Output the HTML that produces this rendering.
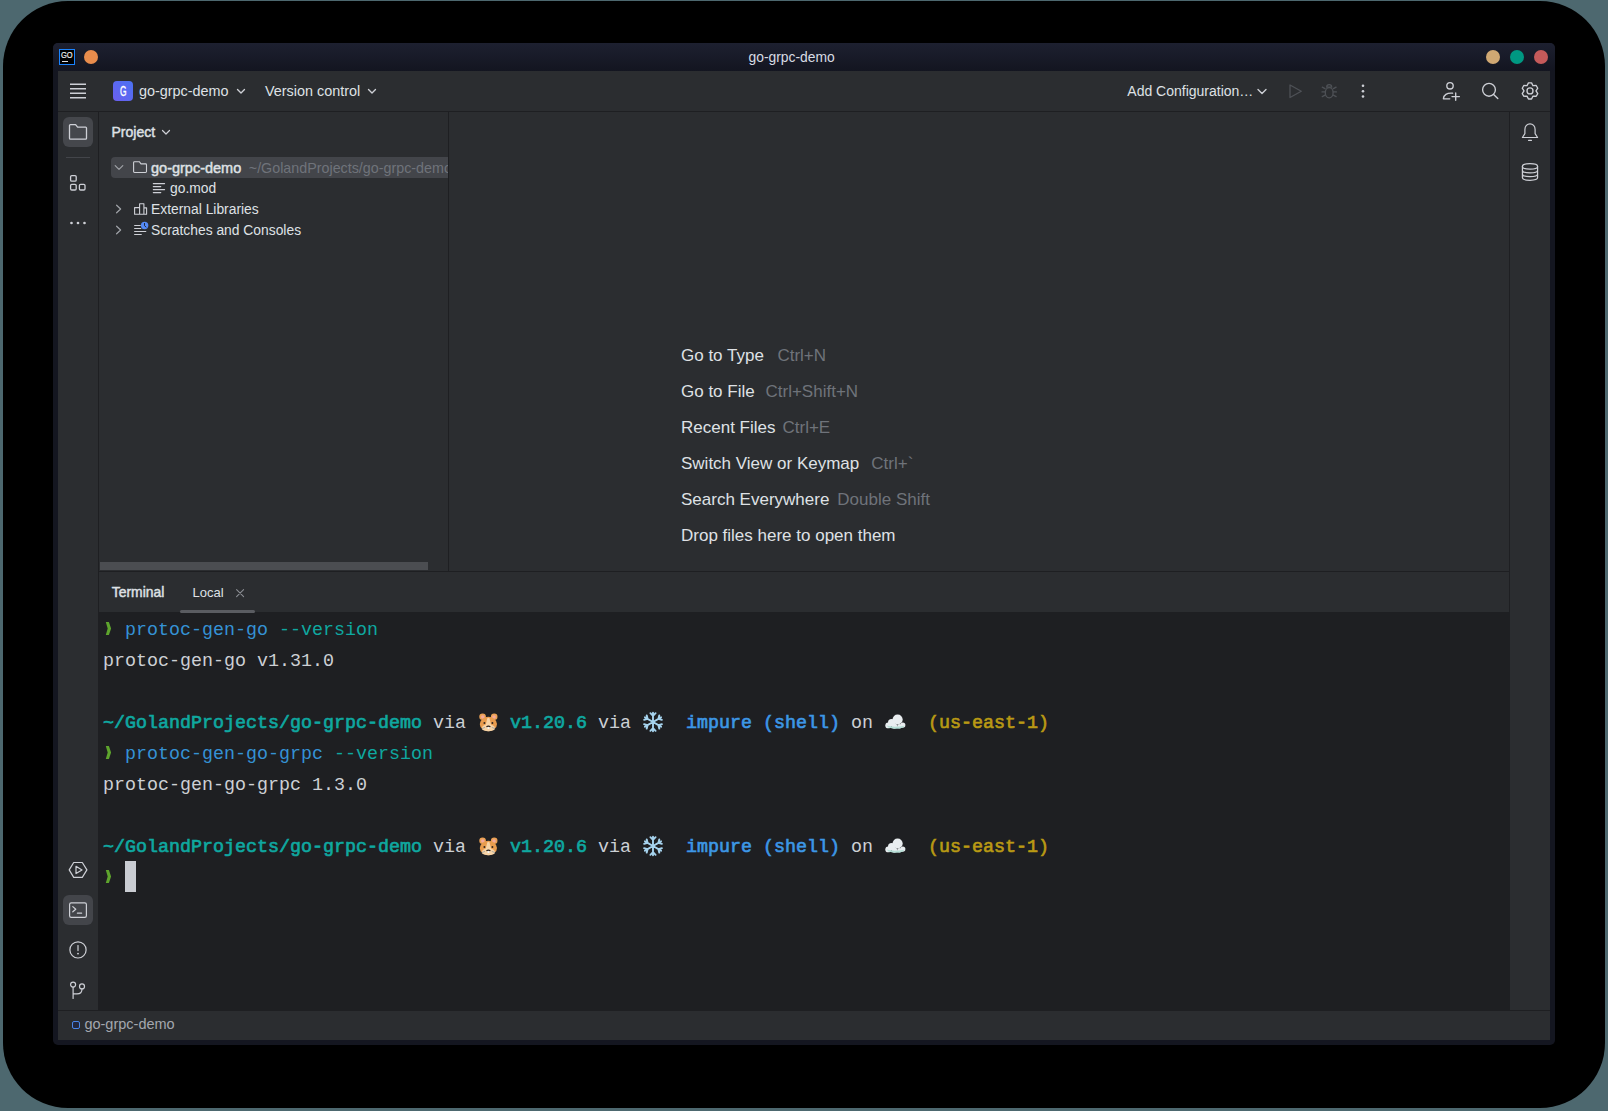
<!DOCTYPE html>
<html><head><meta charset="utf-8"><style>
*{margin:0;padding:0;box-sizing:border-box}
html,body{width:1608px;height:1111px;overflow:hidden;background:#4d686f;font-family:"Liberation Sans",sans-serif}
.a{position:absolute}
.t{position:absolute;white-space:pre;line-height:1}
.sep{position:absolute;background:#1e1f22}
svg{position:absolute;overflow:visible}
#frame{left:3px;top:1px;width:1602px;height:1107px;background:#000;border-radius:65px}
#win{left:53px;top:43px;width:1502px;height:1002px;background:#141620;border-radius:5px}
#title{left:53px;top:43px;width:1502px;height:28px;background:linear-gradient(#1d2030,#131520);border-radius:5px 5px 0 0}
#body{left:58px;top:71px;width:1492px;height:969px;background:#2b2d30}
.term{position:absolute;left:103px;top:614.6px;font-family:"Liberation Mono",monospace;font-size:18.33px;line-height:31px;white-space:pre;color:#cdd0d5}
.term b{font-weight:normal;-webkit-text-stroke:0.65px currentColor}
.es{font-size:16.5px;color:#dfe1e5;letter-spacing:0.45px}
.sc{font-size:16.5px;color:#6f737a;letter-spacing:0.45px}
</style></head><body>
<div id="frame" class="a"></div><div id="win" class="a"></div><div id="title" class="a"></div><div id="body" class="a"></div>
<div class="sep" style="left:58px;top:111px;width:1492px;height:1px"></div>
<div class="sep" style="left:98px;top:112px;width:1px;height:898px"></div>
<div class="sep" style="left:448px;top:112px;width:1px;height:459px"></div>
<div class="sep" style="left:1509px;top:112px;width:1px;height:898px"></div>
<div class="sep" style="left:99px;top:571px;width:1410px;height:1px"></div>
<div class="sep" style="left:58px;top:1010px;width:1492px;height:1px"></div>
<div class="a" style="left:99px;top:612px;width:1410px;height:398px;background:#1e1f22"></div>
<div class="a" style="left:59px;top:49px;width:16px;height:16px;background:#000;border:1px solid #1a84ff"></div>
<div class="t" style="left:61.3px;top:50.65px;font-size:8.8px;color:#eee;-webkit-text-stroke:0.2px #eee;transform:scaleX(0.85);transform-origin:0 0">GO</div>
<div class="a" style="left:62px;top:60.6px;width:6px;height:1.1px;background:#ddd"></div>
<div class="a" style="left:84px;top:50px;width:14px;height:14px;border-radius:50%;background:#e88c4c"></div>
<div class="t" style="left:748.5px;top:50.7px;font-size:13.85px;color:#d8dce4">go-grpc-demo</div>
<div class="a" style="left:1486px;top:50px;width:14px;height:14px;border-radius:50%;background:#d0a873"></div>
<div class="a" style="left:1510px;top:50px;width:14px;height:14px;border-radius:50%;background:#009882"></div>
<div class="a" style="left:1534px;top:50px;width:14px;height:14px;border-radius:50%;background:#c55a5a"></div>
<svg style="left:0;top:0" width="1608" height="200"><path d="M70 84.2 H86 M70 88.7 H86 M70 93.2 H86 M70 97.7 H86" stroke="#ced0d6" stroke-width="1.45"/></svg>
<div class="a" style="left:113px;top:81px;width:20px;height:20px;border-radius:4px;background:linear-gradient(45deg,#6c5ff0,#4a72f2)"></div>
<div class="t" style="left:119.6px;top:83.82px;font-size:14.5px;color:#fff;-webkit-text-stroke:0.35px #fff;transform:scaleX(0.58);transform-origin:0 0">G</div>
<div class="t" style="left:139px;top:84.3px;font-size:14.4px;color:#dfe1e5">go-grpc-demo</div>
<div class="t" style="left:265px;top:84.3px;font-size:14.4px;color:#dfe1e5">Version control</div>
<div class="t" style="left:1127.3px;top:84.4px;font-size:14px;color:#dfe1e5">Add Configuration…</div>
<div class="a" style="left:63px;top:117px;width:30px;height:30px;border-radius:6px;background:#45474c"></div>
<div class="a" style="left:66px;top:157px;width:24px;height:1px;background:#43454a"></div>
<div class="t" style="left:111.5px;top:125.24px;font-size:14px;color:#dfe1e5;-webkit-text-stroke:0.45px #dfe1e5">Project</div>
<div class="a" style="left:111px;top:157px;width:337px;height:21px;border-radius:4px 0 0 4px;background:#43454a"></div>
<div class="t" style="left:151px;top:160.52px;font-size:14.5px;color:#dfe1e5;-webkit-text-stroke:0.45px #dfe1e5">go-grpc-demo</div>
<div class="a" style="left:248px;top:157px;width:200px;height:21px;overflow:hidden"><div class="t" style="left:0.8px;top:4.1px;font-size:14.3px;color:#6f737a">~/GolandProjects/go-grpc-demo</div></div>
<div class="t" style="left:170px;top:182.1px;font-size:13.85px;color:#dfe1e5">go.mod</div>
<div class="t" style="left:151px;top:203.1px;font-size:13.85px;color:#dfe1e5">External Libraries</div>
<div class="t" style="left:151px;top:224.1px;font-size:13.85px;color:#dfe1e5">Scratches and Consoles</div>
<div class="a" style="left:100px;top:562px;width:328px;height:8px;background:#4b4d51"></div>
<div class="t" style="left:681px;top:346.90px;font-size:17px;color:#dfe1e5">Go to Type</div>
<div class="t" style="left:777.4px;top:346.90px;font-size:17px;color:#6f737a">Ctrl+N</div>
<div class="t" style="left:681px;top:382.90px;font-size:17px;color:#dfe1e5">Go to File</div>
<div class="t" style="left:765.5px;top:382.90px;font-size:17px;color:#6f737a">Ctrl+Shift+N</div>
<div class="t" style="left:681px;top:418.90px;font-size:17px;color:#dfe1e5">Recent Files</div>
<div class="t" style="left:782.5px;top:418.90px;font-size:17px;color:#6f737a">Ctrl+E</div>
<div class="t" style="left:681px;top:454.90px;font-size:17px;color:#dfe1e5">Switch View or Keymap</div>
<div class="t" style="left:871.3px;top:454.90px;font-size:17px;color:#6f737a">Ctrl+`</div>
<div class="t" style="left:681px;top:490.90px;font-size:17px;color:#dfe1e5">Search Everywhere</div>
<div class="t" style="left:837.3px;top:490.90px;font-size:17px;color:#6f737a">Double Shift</div>
<div class="t" style="left:681px;top:526.90px;font-size:17px;color:#dfe1e5">Drop files here to open them</div>
<div class="t" style="left:111.8px;top:585.93px;font-size:13.9px;color:#dfe1e5;-webkit-text-stroke:0.45px #dfe1e5">Terminal</div>
<div class="t" style="left:192.6px;top:585.89px;font-size:13px;color:#dfe1e5">Local</div>
<div class="a" style="left:180px;top:610px;width:75px;height:3px;border-radius:1.5px;background:#5a5c61"></div>
<div class="a" style="left:63px;top:895px;width:30px;height:30px;border-radius:6px;background:#43454a"></div>
<div class="a" style="left:72px;top:1021px;width:8px;height:8px;border:1.3px solid #4a86e8;border-radius:2px;background:#23283f"></div>
<div class="t" style="left:84.4px;top:1017.12px;font-size:14.5px;color:#a3a7ae">go-grpc-demo</div>
<div class="term">  <span style="color:#3592d5">protoc-gen-go</span> <span style="color:#0fa8a0">--version</span>
protoc-gen-go v1.31.0

<b style="color:#0fa8a0">~/GolandProjects/go-grpc-demo</b> via <span class="emo">  </span> <b style="color:#0fa8a0">v1.20.6</b> via <span class="emo">  </span>  <b style="color:#3d97e6">impure (shell)</b> on <span class="emo">  </span>  <b style="color:#b99a14">(us-east-1)</b>
  <span style="color:#3592d5">protoc-gen-go-grpc</span> <span style="color:#0fa8a0">--version</span>
protoc-gen-go-grpc 1.3.0

<b style="color:#0fa8a0">~/GolandProjects/go-grpc-demo</b> via <span class="emo">  </span> <b style="color:#0fa8a0">v1.20.6</b> via <span class="emo">  </span>  <b style="color:#3d97e6">impure (shell)</b> on <span class="emo">  </span>  <b style="color:#b99a14">(us-east-1)</b>
</div>
<div class="a" style="left:125px;top:861px;width:11px;height:31px;background:#c9ccd2"></div>
<svg style="left:0;top:0" width="1608" height="1111" viewBox="0 0 1608 1111"><g fill="none" stroke="#ced0d6" stroke-width="1.35" stroke-linecap="round" stroke-linejoin="round"><polyline points="237.5,89.5 241,93 244.5,89.5"/><polyline points="368.5,89.5 372,93 375.5,89.5"/><polyline points="1258,89.5 1262,93.5 1266,89.5"/><circle cx="1450" cy="85.8" r="3.2"/><path d="M1449.8 98.8 H1443.4 C1443.4 95.2 1447 92.6 1452.6 93.2"/><path d="M1452 96.6 H1459.4 M1455.7 92.9 V100.3"/><circle cx="1489" cy="89.8" r="6.4"/><path d="M1493.6 94.4 L1497.8 98.6"/><polygon points="1527.00,85.70 1528.44,82.85 1531.56,82.85 1533.00,85.70 1536.19,85.52 1537.75,88.23 1536.00,90.90 1537.75,93.57 1536.19,96.28 1533.00,96.10 1531.56,98.95 1528.44,98.95 1527.00,96.10 1523.81,96.28 1522.25,93.57 1524.00,90.90 1522.25,88.23 1523.81,85.52"/><circle cx="1530" cy="90.9" r="3"/></g><g fill="none" stroke="#4e5156" stroke-width="1.3" stroke-linecap="round" stroke-linejoin="round"><path d="M1290 85 V97.5 L1301.3 91.2 Z"/><ellipse cx="1329.2" cy="92.7" rx="3.9" ry="5.1"/><path d="M1326.7 87.2 A2.5 2.5 0 0 1 1331.7 87.2 Z"/><path d="M1322.3 87.2 L1325 88.6 M1322 91.9 H1325 M1322.3 96.6 L1325 95.2 M1336.1 87.2 L1333.4 88.6 M1336.4 91.9 H1333.4 M1336.1 96.6 L1333.4 95.2"/></g><g fill="#ced0d6"><circle cx="1363" cy="85.8" r="1.3"/><circle cx="1363" cy="91.2" r="1.3"/><circle cx="1363" cy="96.5" r="1.3"/></g><g fill="none" stroke="#ced0d6" stroke-width="1.3" stroke-linecap="round" stroke-linejoin="round"><path d="M69.5 125.5 Q69.5 124.6 70.4 124.6 H75.6 L77.6 127.2 H85.6 Q86.5 127.2 86.5 128.1 V138.2 Q86.5 139.1 85.6 139.1 H70.4 Q69.5 139.1 69.5 138.2 Z"/><rect x="70.6" y="175.6" width="5.6" height="5.6" rx="1.2"/><rect x="70.6" y="184.4" width="5.6" height="5.6" rx="1.2"/><rect x="79.4" y="184.4" width="5.6" height="5.6" rx="1.2"/></g><g fill="#ced0d6"><circle cx="71.5" cy="223" r="1.35"/><circle cx="78" cy="223" r="1.35"/><circle cx="84.5" cy="223" r="1.35"/></g><polyline points="162.5,130.5 166,134 169.5,130.5" fill="none" stroke="#ced0d6" stroke-width="1.2" stroke-linecap="round" stroke-linejoin="round"/><g fill="none" stroke="#a0a3a8" stroke-width="1.2" stroke-linecap="round" stroke-linejoin="round"><polyline points="115.2,165.6 119,169.4 122.8,165.6"/><polyline points="116.6,205.2 120.6,209 116.6,212.8"/><polyline points="116.6,226.2 120.6,230 116.6,233.8"/></g><g fill="none" stroke="#ced0d6" stroke-width="1.1" stroke-linecap="round" stroke-linejoin="round"><path d="M133.6 162.6 Q133.6 161.7 134.5 161.7 H139.3 L141 163.9 H145.6 Q146.5 163.9 146.5 164.8 V171.6 Q146.5 172.5 145.6 172.5 H134.5 Q133.6 172.5 133.6 171.6 Z"/><path d="M153.3 183.6 H164.6 M153.3 186.6 H160.8 M153.3 189.6 H164.6 M153.3 192.6 H160.8"/><path d="M134.6 214.3 V207.6 H139.6 V203.7 H143.9 V207.9 H146.6 V214.3 Z M139.6 207.6 V214.3 M143.9 207.9 V214.3"/><path d="M134.6 225.5 H140.3 M134.6 228.5 H140.8 M134.6 231.5 H145.8 M134.6 234.5 H141.3"/></g><circle cx="144.6" cy="225.5" r="3.7" fill="#548af7"/><path d="M144.5 223.4 V225.7 L146 227" fill="none" stroke="#1e1f22" stroke-width="0.9" stroke-linecap="round"/><path d="M236.6 589.6 L243.6 596.6 M243.6 589.6 L236.6 596.6" stroke="#8b8e94" stroke-width="1.1" stroke-linecap="round"/><g fill="none" stroke="#ced0d6" stroke-width="1.2" stroke-linecap="round" stroke-linejoin="round"><path d="M69.2 869.9 L73.7 862.5 H82.3 L86.9 869.9 L82.3 877.4 H73.7 Z"/><path d="M76 866.3 V873.6 L82 869.9 Z"/><rect x="69.6" y="902.8" width="16.8" height="14.6" rx="1.6"/><path d="M72.8 906.6 L75.8 909.2 L72.8 911.8 M77.4 913.2 H81.6"/><circle cx="78" cy="949.9" r="8.1"/><path d="M78 945.6 V950.6"/><circle cx="73.1" cy="984.6" r="2.5"/><circle cx="82" cy="986.4" r="2.5"/><path d="M73.1 987.1 V998.4 M82 988.9 Q82 993.9 77 993.9 H73.1"/></g><circle cx="78" cy="953.6" r="0.95" fill="#ced0d6"/><g fill="none" stroke="#ced0d6" stroke-width="1.2" stroke-linecap="round" stroke-linejoin="round"><path d="M1522.4 137.5 L1524.9 133.6 V129.4 A5.1 5.6 0 0 1 1535.1 129.4 V133.6 L1537.6 137.5 Z"/><path d="M1528.6 140.4 H1531.4"/><ellipse cx="1530" cy="166.4" rx="7.6" ry="2.7"/><path d="M1522.4 166.4 V177.6 A7.6 2.7 0 0 0 1537.6 177.6 V166.4 M1522.4 170.2 A7.6 2.7 0 0 0 1537.6 170.2 M1522.4 174 A7.6 2.7 0 0 0 1537.6 174"/></g><g transform="translate(0,0)"><circle cx="482.6" cy="716.7" r="3.3" fill="#eca255"/><circle cx="494.2" cy="716.7" r="3.3" fill="#eca255"/><circle cx="482.8" cy="717" r="1.8" fill="#f3a99c"/><circle cx="494" cy="717" r="1.8" fill="#f3a99c"/><ellipse cx="488.4" cy="724" rx="8.6" ry="7.2" fill="#e99c4e"/><path d="M487.3 718.2 Q488.4 717.4 489.5 718.2 L491 724.5 Q496 726 494.5 729.8 Q492 731.4 488.4 731.2 Q484.8 731.4 482.3 729.8 Q480.8 726 485.8 724.5 Z" fill="#f7d3a6"/><circle cx="484.4" cy="723" r="0.95" fill="#2b2320"/><circle cx="492.4" cy="723" r="0.95" fill="#2b2320"/><path d="M486.4 726.8 Q488.4 725.4 490.4 726.8" fill="none" stroke="#2b2320" stroke-width="1.1"/><rect x="487.6" y="727.2" width="1.7" height="1.8" fill="#eef4fa"/><path d="M481.8 728.6 L485 727.4 M495 728.6 L491.8 727.4" stroke="#9aa0a0" stroke-width="0.8"/><path d="M653.00 722.00 L653.00 712.70 M653.00 715.80 L655.60 713.20 M653.00 715.80 L650.40 713.20 M653.00 722.00 L661.05 717.35 M658.37 718.90 L661.92 719.85 M658.37 718.90 L659.32 715.35 M653.00 722.00 L661.05 726.65 M658.37 725.10 L659.32 728.65 M658.37 725.10 L661.92 724.15 M653.00 722.00 L653.00 731.30 M653.00 728.20 L650.40 730.80 M653.00 728.20 L655.60 730.80 M653.00 722.00 L644.95 726.65 M647.63 725.10 L644.08 724.15 M647.63 725.10 L646.68 728.65 M653.00 722.00 L644.95 717.35 M647.63 718.90 L646.68 715.35 M647.63 718.90 L644.08 719.85" fill="none" stroke="#a6d3ee" stroke-width="1.9" stroke-linecap="round"/><g fill="#e9edf0"><circle cx="897.6" cy="719.5" r="5.1"/><circle cx="891.6" cy="722.6" r="3.6"/><circle cx="888.2" cy="725.4" r="2.9"/><circle cx="902.8" cy="725.1" r="2.6"/><circle cx="894.3" cy="726" r="2.8"/><circle cx="899.4" cy="726.3" r="2.3"/></g><path d="M886.5 725.6 Q893 727.8 904.5 725.8 Q903.5 728 900 728.6 Q894 729.2 888.5 727.5 Z" fill="#b5ded6"/></g><g transform="translate(0,124)"><circle cx="482.6" cy="716.7" r="3.3" fill="#eca255"/><circle cx="494.2" cy="716.7" r="3.3" fill="#eca255"/><circle cx="482.8" cy="717" r="1.8" fill="#f3a99c"/><circle cx="494" cy="717" r="1.8" fill="#f3a99c"/><ellipse cx="488.4" cy="724" rx="8.6" ry="7.2" fill="#e99c4e"/><path d="M487.3 718.2 Q488.4 717.4 489.5 718.2 L491 724.5 Q496 726 494.5 729.8 Q492 731.4 488.4 731.2 Q484.8 731.4 482.3 729.8 Q480.8 726 485.8 724.5 Z" fill="#f7d3a6"/><circle cx="484.4" cy="723" r="0.95" fill="#2b2320"/><circle cx="492.4" cy="723" r="0.95" fill="#2b2320"/><path d="M486.4 726.8 Q488.4 725.4 490.4 726.8" fill="none" stroke="#2b2320" stroke-width="1.1"/><rect x="487.6" y="727.2" width="1.7" height="1.8" fill="#eef4fa"/><path d="M481.8 728.6 L485 727.4 M495 728.6 L491.8 727.4" stroke="#9aa0a0" stroke-width="0.8"/><path d="M653.00 722.00 L653.00 712.70 M653.00 715.80 L655.60 713.20 M653.00 715.80 L650.40 713.20 M653.00 722.00 L661.05 717.35 M658.37 718.90 L661.92 719.85 M658.37 718.90 L659.32 715.35 M653.00 722.00 L661.05 726.65 M658.37 725.10 L659.32 728.65 M658.37 725.10 L661.92 724.15 M653.00 722.00 L653.00 731.30 M653.00 728.20 L650.40 730.80 M653.00 728.20 L655.60 730.80 M653.00 722.00 L644.95 726.65 M647.63 725.10 L644.08 724.15 M647.63 725.10 L646.68 728.65 M653.00 722.00 L644.95 717.35 M647.63 718.90 L646.68 715.35 M647.63 718.90 L644.08 719.85" fill="none" stroke="#a6d3ee" stroke-width="1.9" stroke-linecap="round"/><g fill="#e9edf0"><circle cx="897.6" cy="719.5" r="5.1"/><circle cx="891.6" cy="722.6" r="3.6"/><circle cx="888.2" cy="725.4" r="2.9"/><circle cx="902.8" cy="725.1" r="2.6"/><circle cx="894.3" cy="726" r="2.8"/><circle cx="899.4" cy="726.3" r="2.3"/></g><path d="M886.5 725.6 Q893 727.8 904.5 725.8 Q903.5 728 900 728.6 Q894 729.2 888.5 727.5 Z" fill="#b5ded6"/></g><polygon transform="translate(0,-248)" points="105.8,869.9 108.9,869.9 111.1,876.4 108.9,882.9 105.8,882.9 107.7,876.4" fill="#5ea42d"/><polygon transform="translate(0,-124)" points="105.8,869.9 108.9,869.9 111.1,876.4 108.9,882.9 105.8,882.9 107.7,876.4" fill="#5ea42d"/><polygon transform="translate(0,0)" points="105.8,869.9 108.9,869.9 111.1,876.4 108.9,882.9 105.8,882.9 107.7,876.4" fill="#5ea42d"/></svg>

</body></html>
